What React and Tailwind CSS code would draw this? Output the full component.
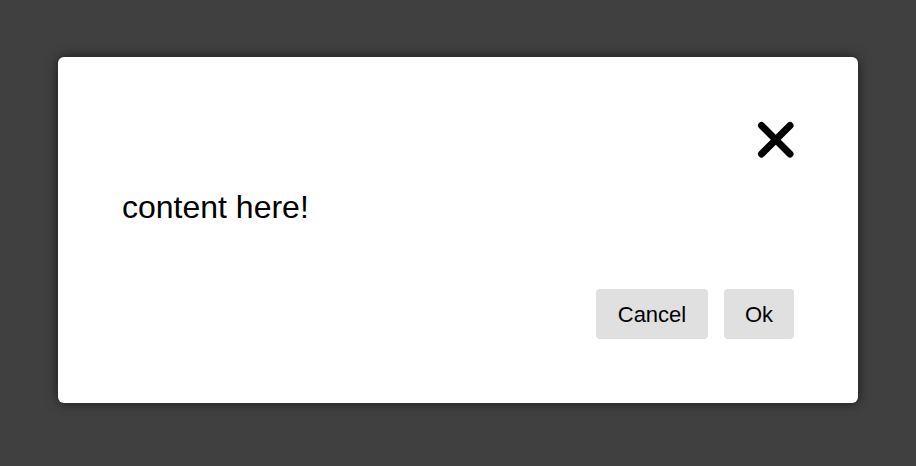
export default function App() {
  return (
    <div
      className="w-[916px] h-[466px] bg-[#404040] pt-[57px]"
      style={{ fontFamily: '"Liberation Sans", Arial, sans-serif' }}
    >
      {/* Modal */}
      <div className="mx-auto w-[800px] h-[346px] bg-white rounded-[6px] shadow-[0_0_12px_rgba(0,0,0,0.6)] px-[64px] pt-[64px] pb-[64px] flex flex-col">
        <div className="flex justify-end">
          <button className="w-[38px] h-[38px] -mr-[1px] flex items-start justify-center">
            <svg width="38" height="38" viewBox="0 0 38 38">
              <line x1="4.5" y1="4.5" x2="33" y2="33" stroke="#000" strokeWidth="7" strokeLinecap="round" />
              <line x1="33" y1="4.5" x2="4.5" y2="33" stroke="#000" strokeWidth="7" strokeLinecap="round" />
            </svg>
          </button>
        </div>
        <p className="mt-[30px] text-[32px] leading-[37px] text-black">content here!</p>
        <div className="mt-auto flex justify-end gap-4">
          <button className="h-[50px] w-[112px] bg-[#e0e0e0] rounded-[4px] text-[22px] text-black">
            Cancel
          </button>
          <button className="h-[50px] w-[70px] bg-[#e0e0e0] rounded-[4px] text-[22px] text-black">
            Ok
          </button>
        </div>
      </div>
    </div>
  )
}
